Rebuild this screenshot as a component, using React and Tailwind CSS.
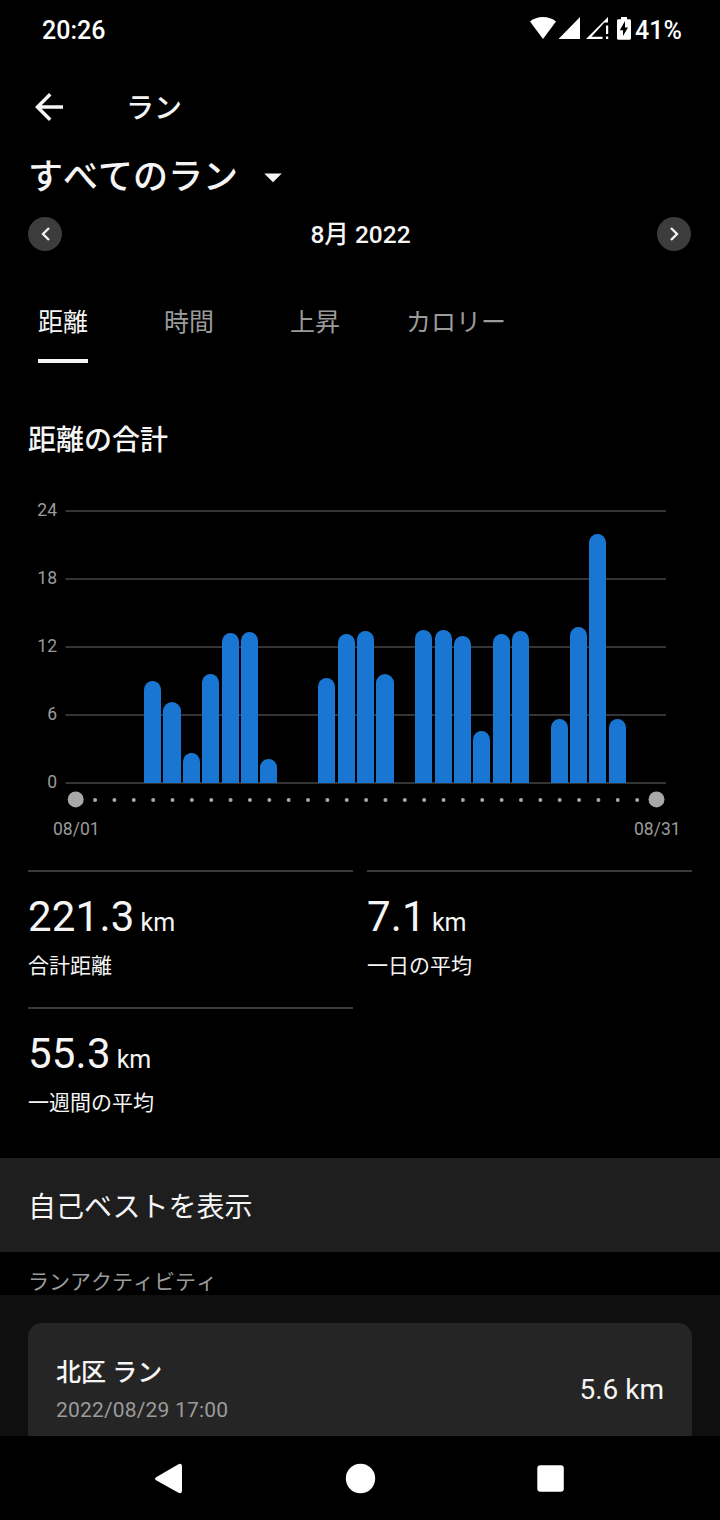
const DAYS_IN_MONTH = 31;
const MAX_KM = 24;

// Distance per day of the month, in km
const RUNS = [
  { day: 5, km: 9 },
  { day: 6, km: 7.15 },
  { day: 7, km: 2.65 },
  { day: 8, km: 9.62 },
  { day: 9, km: 13.24 },
  { day: 10, km: 13.32 },
  { day: 11, km: 2.12 },
  { day: 14, km: 9.26 },
  { day: 15, km: 13.15 },
  { day: 16, km: 13.41 },
  { day: 17, km: 9.62 },
  { day: 19, km: 13.5 },
  { day: 20, km: 13.5 },
  { day: 21, km: 12.97 },
  { day: 22, km: 4.59 },
  { day: 23, km: 13.15 },
  { day: 24, km: 13.41 },
  { day: 26, km: 5.65 },
  { day: 27, km: 13.76 },
  { day: 28, km: 21.97 },
  { day: 29, km: 5.65 },
];

const TABS = [
  { label: '距離', active: true, width: 'w-[126px]' },
  { label: '時間', active: false, width: 'w-[126px]' },
  { label: '上昇', active: false, width: 'w-[126px]' },
  { label: 'カロリー', active: false, width: 'w-[156px]' },
];

const STATS = [
  { value: '221.3', unit: 'km', label: '合計距離' },
  { value: '7.1', unit: 'km', label: '一日の平均' },
  { value: '55.3', unit: 'km', label: '一週間の平均' },
];

function StatusBar() {
  return (
    <header className="flex h-[60px] items-center justify-between pl-[42px] pr-[39px] pt-0.5 text-[25px] font-medium text-white">
      <span>20:26</span>
      <div className="flex items-center">
        <svg className="mb-1.5" width="105" height="26" viewBox="0 0 105 26" fill="#fff" aria-hidden="true">
          {/* Wifi */}
          <path d="M13 24 0 6.600C3.400 3.600 8 2 13 2s9.600 1.600 13 4.600z" />
          {/* First SIM */}
          <path d="M28.500 24 50 2v22z" />
          {/* Second SIM, no data */}
          <path d="M56 24 78 2v5.500h-3.600L61.500 21.800h11V24z" />
          <path d="M76 10.500h2.200v8.500H76zM76 21.500h2.200V24H76z" />
          {/* Battery */}
          <path
            fillRule="evenodd"
            d="M91 2h6v2.300h2.500c.9 0 1.500.6 1.500 1.500v17.400c0 .9-.6 1.500-1.500 1.500h-11c-.9 0-1.500-.6-1.500-1.500V5.800c0-.9.600-1.500 1.500-1.500H91zm4 4-5.200 9.300h3.200V21l5-8.500h-3z"
          />
        </svg>
        <span className="w-[46px] whitespace-nowrap">41%</span>
      </div>
    </header>
  );
}

function TopBar() {
  return (
    <div className="flex h-[94px] items-center px-7">
      <svg width="42" height="42" viewBox="0 0 24 24" fill="#f5f5f5" aria-hidden="true">
        <path d="M20 11H7.830l5.590-5.590L12 4l-8 8 8 8 1.410-1.410L7.830 13H20z" />
      </svg>
      <h1 className="ml-14 pt-[3px] text-[28px] font-medium leading-none [font-kerning:none]">ラン</h1>
    </div>
  );
}

function RoundButton({ label, d }) {
  return (
    <button aria-label={label} className="flex size-[34px] items-center justify-center rounded-full bg-[#3c3c3c]">
      <svg width="34" height="34" viewBox="0 0 34 34" fill="none" stroke="#f5f5f5" strokeWidth="2.300">
        <path d={d} />
      </svg>
    </button>
  );
}

function Tabs() {
  return (
    <nav className="flex h-[82px] text-[25px]">
      {TABS.map((tab) => (
        <div key={tab.label} className={`flex justify-center ${tab.width}`}>
          <span
            className={
              tab.active
                ? 'h-full border-b-4 border-[#f5f5f5] leading-[84px]'
                : 'h-full leading-[84px] text-[#9b9b9b]'
            }
          >
            {tab.label}
          </span>
        </div>
      ))}
    </nav>
  );
}

function DistanceChart() {
  const baseline = 293;
  const plotHeight = 272;
  const pitch = 19.36;
  const days = Array.from({ length: DAYS_IN_MONTH }, (_, i) => i + 1);

  return (
    <svg width="720" height="380" viewBox="0 0 720 380" className="block" role="img" aria-label="距離の合計">
      {[24, 18, 12, 6, 0].map((tick) => {
        const y = baseline - (tick / MAX_KM) * plotHeight;
        return (
          <g key={tick}>
            <rect x="65.500" y={y - 0.9} width="600.500" height="1.800" fill="#3a3a3a" />
            <text x="57" y={y + 5} textAnchor="end" fontSize="17.500" fill="#9b9b9b">
              {tick}
            </text>
          </g>
        );
      })}

      {RUNS.map(({ day, km }) => {
        // Snap both edges to whole pixels so that the bars stay sharp
        const start = 66.69 + (day - 1) * pitch;
        const left = Math.round(start);
        const right = Math.round(start + 17.07);
        const top = Math.round(baseline - (km / MAX_KM) * plotHeight);
        const r = (right - left) / 2;
        return (
          <path
            key={day}
            fill="#1976d2"
            d={`M${left} ${baseline}V${top + r}a${r} ${r} 0 0 1 ${r * 2} 0V${baseline}z`}
          />
        );
      })}

      {days.map((day) => {
        const edge = day === 1 || day === DAYS_IN_MONTH;
        return (
          <circle
            key={day}
            cx={75.7 + (day - 1) * pitch}
            cy={edge ? 309.4 : 310}
            r={edge ? 8 : 2}
            fill="#a8a8a8"
          />
        );
      })}
      <text x="76.300" y="345" textAnchor="middle" fontSize="17.500" fill="#9b9b9b">
        08/01
      </text>
      <text x="657.300" y="345" textAnchor="middle" fontSize="17.500" fill="#9b9b9b">
        08/31
      </text>
    </svg>
  );
}

function Stat({ value, unit, label }) {
  return (
    <div className="h-[137px] border-t-2 border-[#3a3a3a] pt-[18px]">
      <div className="flex items-baseline gap-1.5 leading-[54px]">
        <span className="text-[42px] tracking-[0.2px]">{value}</span>
        <span className="text-[25px]">{unit}</span>
      </div>
      <div className="text-[21px] leading-8">{label}</div>
    </div>
  );
}

function NavBar() {
  return (
    <footer className="flex h-[84px] items-center bg-black">
      <svg width="720" height="84" viewBox="0 0 720 84" fill="#fff" aria-hidden="true">
        <path d="M156.500 41 178 28.500q4-2 4 2v24q0 4-4 2L156.500 44.500q-3-1.700 0-3.500z" />
        <circle cx="360.500" cy="42.500" r="14.700" />
        <rect x="537.300" y="29.300" width="26.500" height="26.500" rx="3" />
      </svg>
    </footer>
  );
}

export default function App() {
  return (
    <div className="flex h-[1520px] w-[720px] flex-col overflow-hidden bg-black font-['Roboto','Noto_Sans_CJK_JP',sans-serif] text-[#f5f5f5]">
      <StatusBar />
      <TopBar />

      <div className="flex h-[46px] items-center px-7">
        <h2 className="text-[35px] font-medium leading-none [font-kerning:none]">すべてのラン</h2>
        <svg className="ml-3.5" width="42" height="42" viewBox="0 0 24 24" fill="#f5f5f5" aria-hidden="true">
          <path d="M7 10l5 5 5-5z" />
        </svg>
      </div>

      <div className="mt-[17px] flex h-[34px] items-center justify-between pl-7 pr-[29px]">
        <RoundButton label="前の月" d="M21 11l-6 6 6 6" />
        <span className="pl-0.5 pt-0.5 text-[24.5px] font-medium leading-none">8月 2022</span>
        <RoundButton label="次の月" d="M14 11l6 6-6 6" />
      </div>

      <div className="mt-[30px]">
        <Tabs />
      </div>

      <h3 className="mt-[57px] px-7 text-[28px] font-medium leading-[42px]">距離の合計</h3>

      <div className="mt-7">
        <DistanceChart />
      </div>

      <section className="grid h-[288px] shrink-0 grid-cols-2 content-start gap-x-3.5 px-7">
        {STATS.map((stat) => (
          <Stat key={stat.label} {...stat} />
        ))}
      </section>

      <button className="h-[94px] shrink-0 bg-[#1e1e1e] px-7 pt-[5px] text-left text-[28px]">自己ベストを表示</button>

      <h4 className="h-[43px] shrink-0 px-7 text-[21px] leading-[60px] text-[#9b9b9b] [font-kerning:none]">
        ランアクティビティ
      </h4>

      <section className="h-[141px] shrink-0 overflow-hidden bg-[#0f0f0f] px-7 pt-7">
        <article className="flex h-[134px] items-center justify-between rounded-[14px] bg-[#252525] px-7">
          <div>
            <div className="text-[25px] font-medium leading-[42px]">北区 ラン</div>
            <div className="pb-0.5 text-[21px] leading-[33px] tracking-[0.18px] text-[#9b9b9b]">2022/08/29 17:00</div>
          </div>
          <span className="text-[28px]">5.6 km</span>
        </article>
      </section>

      <NavBar />
    </div>
  );
}
